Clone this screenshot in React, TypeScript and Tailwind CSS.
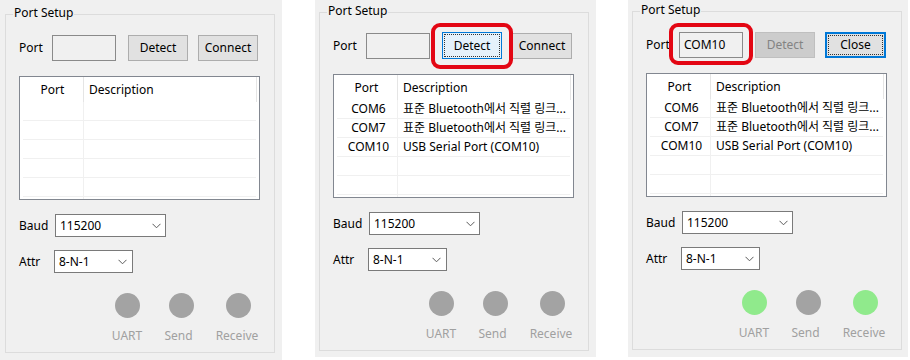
import React from "react";

type Row = [string, string];

const KR = "표준 Bluetooth에서 직렬 링크...";
const ROWS: Row[] = [
  ["COM6", KR],
  ["COM7", KR],
  ["COM10", "USB Serial Port (COM10)"],
];

function Button({
  label,
  kind,
}: {
  label: string;
  kind: "normal" | "focusLight" | "focusBlue" | "disabled";
}) {
  if (kind === "disabled") {
    return (
      <div className="w-[60px] h-[26px] border border-[#bfbfbf] bg-[#cccccc] text-[#838383] flex items-center justify-center">
        {label}
      </div>
    );
  }
  if (kind === "focusLight") {
    return (
      <div className="relative w-[60px] h-[27px] border border-[#0078d7] bg-[#e5f1fb] text-black flex items-center justify-center">
        <div className="absolute inset-[1px] border border-dotted border-[#333]" />
        {label}
      </div>
    );
  }
  if (kind === "focusBlue") {
    return (
      <div className="relative w-[61px] h-[26px] border-2 border-[#0078d7] bg-[#e1e1e1] text-black flex items-center justify-center">
        <div className="absolute inset-[1px] border border-dotted border-[#333]" />
        {label}
      </div>
    );
  }
  return (
    <div className="w-[60px] h-[26px] border border-[#adadad] bg-[#e1e1e1] text-black flex items-center justify-center">
      {label}
    </div>
  );
}

function Chevron() {
  return (
    <svg width="9" height="6" viewBox="0 0 9 6" className="shrink-0">
      <polyline points="0.5,0.8 4.5,4.8 8.5,0.8" fill="none" stroke="#5a5a5a" strokeWidth="1" />
    </svg>
  );
}

function ListBox({ rows }: { rows: Row[] }) {
  const all: Row[] = [...rows];
  while (all.length < 6) all.push(["", ""]);
  return (
    <div className="mt-[15px] w-[241px] h-[124px] border border-[#828790] bg-white overflow-hidden">
      <div className="flex h-[25px] text-black">
        <div className="w-[64px] h-full flex items-center justify-center border-r border-[#e5e5e5] pl-[2px]">
          Port
        </div>
        <div className="w-[173px] h-full flex items-center pl-[5px] border-r border-[#e5e5e5]">
          Description
        </div>
      </div>
      <div className="px-[3px]">
        {all.map(([p, d], i) => (
          <div key={i} className="flex h-[19px] border-b border-[#f0f0f0] text-black">
            <div className="w-[61px] shrink-0 flex items-center justify-center border-r border-[#f0f0f0] pl-[3px]">
              {p}
            </div>
            <div className="flex-1 flex items-center pl-[5px] whitespace-nowrap overflow-hidden">
              {d}
            </div>
          </div>
        ))}
      </div>
    </div>
  );
}

function Led({ on, label, labelClass }: { on: boolean; label: string; labelClass: string }) {
  return (
    <div className="flex flex-col items-center">
      <div className={on ? "w-[25px] h-[25px] rounded-full bg-[#90ea8c]" : "w-[25px] h-[25px] rounded-full bg-[#a3a3a3]"} />
      <div className={labelClass}>{label}</div>
    </div>
  );
}

function Panel({ variant }: { variant: 1 | 2 | 3 }) {
  const panelClass =
    variant === 1
      ? "w-[282px] h-[360px] bg-[#f0f0f0] pt-[14px] pl-[5px] shrink-0"
      : variant === 2
      ? "ml-[33px] w-[281px] h-[357px] bg-[#f0f0f0] pt-[12px] pl-[4px] shrink-0"
      : "ml-[32px] w-[280px] h-[357px] bg-[#f0f0f0] pt-[11px] pl-[4px] shrink-0";
  const rows = variant === 1 ? [] : ROWS;
  const greens = variant === 3;
  return (
    <div className={panelClass}>
      <div className="relative w-[270px] h-[339px] border border-[#dcdcdc] pl-[13px] pt-[19px]">
        <div className="absolute left-[7px] top-[-10px] px-[1px] bg-[#f0f0f0] leading-[16px] text-black">
          Port Setup
        </div>

        <div className="flex items-center h-[27px]">
          <div className="w-[33px] text-black">Port</div>
          <div className="w-[64px] h-[26px] border border-[#8a8a8a] bg-[#f0f0f0] flex items-center pl-[4px] text-black">
            {variant === 3 ? "COM10" : ""}
          </div>
          <div className="ml-[12px]">
            <Button
              label="Detect"
              kind={variant === 2 ? "focusLight" : variant === 3 ? "disabled" : "normal"}
            />
          </div>
          <div className="ml-[10px]">
            <Button label={variant === 3 ? "Close" : "Connect"} kind={variant === 3 ? "focusBlue" : "normal"} />
          </div>
        </div>

        <ListBox rows={rows} />

        <div className="mt-[14px] flex items-center">
          <div className="w-[36px] text-black">Baud</div>
          <div className="w-[111px] h-[23px] border border-[#7a7a7a] bg-white flex items-center justify-between pl-[4px] pr-[4px] text-black">
            <span>115200</span>
            <Chevron />
          </div>
        </div>

        <div className="mt-[13px] flex items-center">
          <div className="w-[35px] text-black">Attr</div>
          <div className="w-[79px] h-[23px] border border-[#7a7a7a] bg-white flex items-center justify-between pl-[4px] pr-[5px] text-black">
            <span>8-N-1</span>
            <Chevron />
          </div>
        </div>

        <div className="mt-[20px] ml-[86px] flex">
          <div className="w-[44px] flex justify-center">
            <Led on={greens} label="UART" labelClass="mt-[10px] text-[#a0a0a0]" />
          </div>
          <div className="ml-[10px] w-[44px] flex justify-center">
            <Led on={false} label="Send" labelClass="mt-[10px] mr-[5px] text-[#a0a0a0]" />
          </div>
          <div className="ml-[10px] w-[52px] flex justify-center">
            <Led on={greens} label="Receive" labelClass="mt-[10px] mr-[4px] text-[#a0a0a0]" />
          </div>
        </div>

        {variant === 2 && (
          <div className="absolute left-[111px] top-[10px] w-[82px] h-[46px] border-4 border-[#e30613] rounded-[9px]" />
        )}
        {variant === 3 && (
          <div className="absolute left-[36px] top-[11px] w-[84px] h-[42px] border-4 border-[#e30613] rounded-[9px]" />
        )}
      </div>
    </div>
  );
}

export default function App() {
  return (
    <div className="w-[910px] h-[360px] bg-white flex items-start overflow-hidden font-['Noto_Sans','Noto_Sans_CJK_KR',sans-serif] text-[12px] leading-[16px]">
      <Panel variant={1} />
      <Panel variant={2} />
      <Panel variant={3} />
    </div>
  );
}
